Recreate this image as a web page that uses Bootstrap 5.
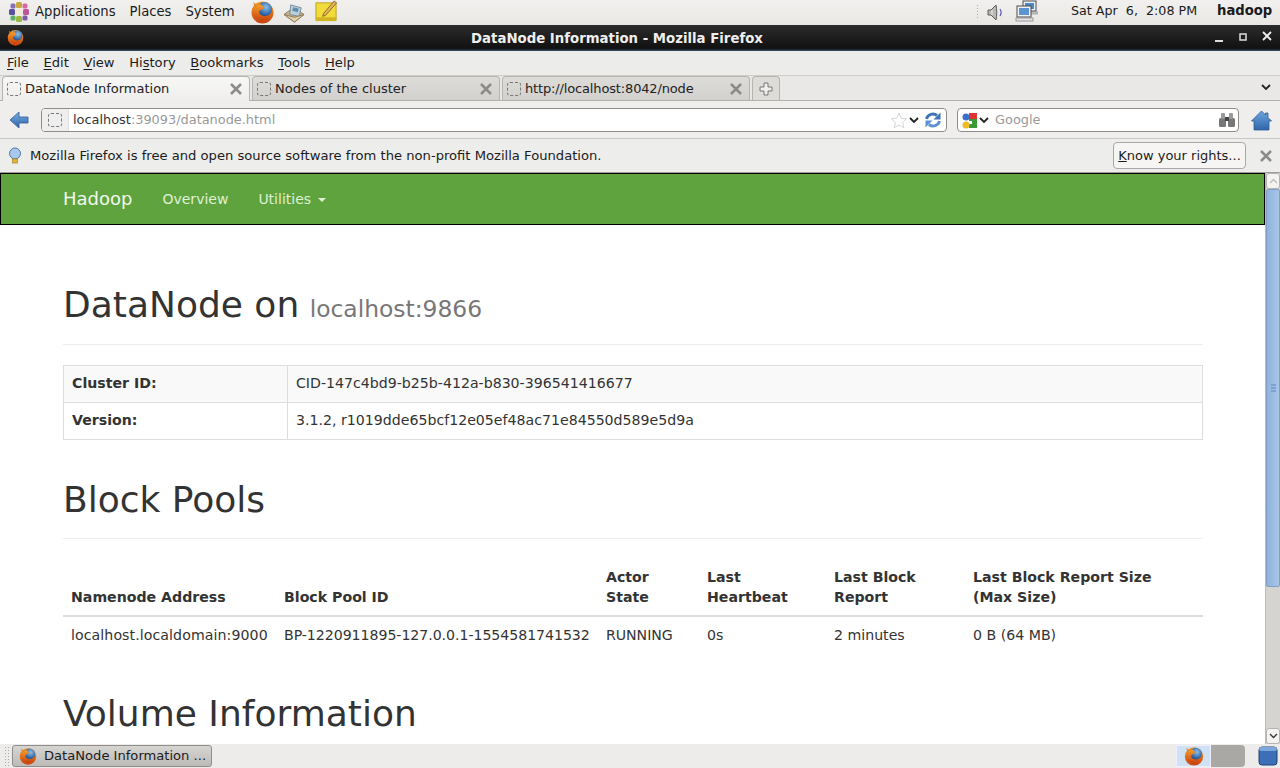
<!DOCTYPE html>
<html lang="en">
<head>
<meta charset="utf-8">
<title>DataNode Information - Mozilla Firefox</title>
<link rel="stylesheet" href="https://cdn.jsdelivr.net/npm/bootstrap@5.3.0/dist/css/bootstrap.min.css">
<style>
html,body{height:768px;overflow:hidden;margin:0}
body{font-family:"DejaVu Sans",sans-serif;font-size:14.15px;color:#333;background:#fff;line-height:20px}
.desk{width:1280px;height:768px}
.top-panel{height:25px;background:linear-gradient(#f1f0ee,#e9e8e5);color:#1b1b1b;padding:0 0 1px 7px;flex:none;font-size:13.2px}
.top-panel .gm{margin-right:14px}
.top-panel .ico{position:absolute}
.dots{position:absolute;left:976px;top:4px;width:3px;height:16px;background-image:radial-gradient(#aaa 1px,transparent 1px);background-size:3px 3px}
.title-bar{height:26px;background:linear-gradient(#2c2c2c,#111 90%,#39506b);color:#eee;font-weight:700;font-size:13.3px;flex:none;position:relative}
.title-bar .ttl{width:100%;text-align:center;padding:1px 46px 0 0}
.chrome-ic{position:absolute;top:4px}
.wctl{position:absolute;right:7px;top:4px;gap:12px}
.menu-row{height:25px;background:#ececea;flex:none;padding-left:7px;gap:14.6px;border-bottom:1px solid #cfcdca;color:#1c1c1c;font-size:13.1px}
.menu-row u{text-underline-offset:2px}
.tab-row{height:25px;background:#e9e8e6;flex:none;padding-left:2px;border-bottom:1px solid #b3b1ad;position:relative;font-size:13px}
.ff-tab{width:248px;height:24px;margin-right:2px;border:1px solid #b6b4b0;border-bottom:0;border-radius:4px 4px 0 0;padding:0 6px 0 4px;background:linear-gradient(#dedcd9,#d3d1ce);color:#222;gap:4px}
.ff-tab.on{background:linear-gradient(#f7f7f6,#efeeec);height:25px;margin-bottom:-1px}
.ff-tab .nm{flex:1;white-space:nowrap;overflow:hidden}
.ff-tab .nm.tight{letter-spacing:-.15px}
.new-tab{width:28px;height:24px;border:1px solid #b6b4b0;border-bottom:0;border-radius:4px 4px 0 0;background:#dedcd9}
.tab-more{position:absolute;right:8px;top:7px}
.dash{width:14px;height:14px;border:1px dashed #777;border-radius:3px;flex:none}
.nav-row{height:38px;background:#efeeec;flex:none;padding:1px 0 0 9px;border-bottom:1px solid #c9c7c4}
.field{height:24px;background:#fff;border:1px solid #8d8c89;border-radius:4px;font-size:12.9px}
.url-f{width:906px;margin-left:12px}
.url-f .ident{width:27px;height:22px;background:#eee;border-right:1px solid #ddd;border-radius:3px 0 0 3px}
.url-f .addr{padding-left:4px;flex:1;color:#999}
.url-f .addr b{font-weight:400;color:#333}
.srch{width:282px;margin-left:10px;padding:0 2px 0 3px}
.srch .hint{flex:1;color:#999;margin-left:5px}
.home-ic{margin-left:12px}
.note-bar{height:34px;background:#ededeb;flex:none;padding-left:8px;border-bottom:1px solid #9d9c99;color:#1c1c1c;font-size:13.13px}
.rights{height:27px;width:133px;background:#f6f5f4;border:1px solid #a8a7a3;border-radius:4px;color:#1c1c1c;font-size:13px;margin-left:auto;margin-right:13px;padding:0;white-space:nowrap}
.note-x{margin-right:7px}
.view{flex:1;min-height:0;overflow:hidden}
.doc{flex:1;min-width:0;overflow:hidden}
.hbar{height:52px;background:#5fa33e;border:1px solid #000;padding-left:62px;color:#dff0d4;font-size:14px}
.hbar .brand{font-size:18px;color:#f2f8ee;margin-right:30px}
.hbar .lnk{margin-right:30px;color:#dff0d4}
.caret-d{display:inline-block;border-top:4px solid;border-left:4px solid transparent;border-right:4px solid transparent;margin-left:2px;vertical-align:middle}
.wrap-c{padding:0 62px 0 63px}
.hd-block{margin-top:60px;padding-bottom:19px;border-bottom:1px solid #eee;margin-bottom:20px}
.hd-block h1,.vol-h{font-size:36px;line-height:39.6px;font-weight:500;color:#333;font-family:"DejaVu Sans",sans-serif}
.hd-block h1{margin:0}
.hd-block small{font-size:23.4px;line-height:1;color:#777;font-weight:400;margin-left:-1px}
.hd-two{margin-top:40px}
.info-t{width:1140px;border-collapse:collapse;margin:0;table-layout:fixed}
.info-t td,.info-t th{border:1px solid #ddd;padding:7px 8px 9px;line-height:20px;color:#333}
.info-t tr:first-child>*{background:#f9f9f9}
.info-t th{width:224px}
.pool-t{width:1140px;margin:0;border-collapse:collapse;table-layout:fixed}
.pool-t th{font-weight:700;padding:8px;vertical-align:bottom;border-bottom:2px solid #ddd;line-height:20px;color:#333}
.pool-t td{padding:8px;line-height:20px;color:#333;white-space:nowrap}
.pool-t th:nth-child(1){width:213px}
.pool-t th:nth-child(2){width:322px}
.pool-t th:nth-child(3){width:101px}
.pool-t th:nth-child(4){width:127px}
.pool-t th:nth-child(5){width:139px}
.pool-t td:nth-child(1){letter-spacing:.08px}
.pool-t td:nth-child(2),.pool-t td:nth-child(3){letter-spacing:-.05px}
.vol-h{margin:41px 0 0}
.sbar{width:15px;flex:none;background:#d6d4d1;border-left:1px solid #bdbbb8}
.sb-btn{height:16px;background:#f4f3f1;border:1px solid #b5b3af;border-radius:3px}
.sb-thumb{height:398px;background:linear-gradient(90deg,#8fb3dd,#a9c6e8);border:1px solid #7e9fc6;border-radius:2px}
.sb-rest{flex:1}
.bot-panel{height:24px;background:#edecea;flex:none;padding-left:4px;position:relative;font-size:13.1px}
.grip{width:6px;height:20px;background-image:radial-gradient(#aaa 1px,transparent 1px);background-size:3px 3px;margin-right:2px}
.task{width:200px;height:22px;background:linear-gradient(#d7d5d2,#bdbbb8);border:1px solid #8f8e8b;border-radius:3px;padding-left:6px;gap:7px;color:#1c1c1c;white-space:nowrap}
.pager{position:absolute;left:1176px;top:1px;width:69px;height:22px;background:#aaa8a4;border-radius:0 4px 4px 0}
.pg-on{width:35px;height:22px;background:#cfe2f5;border:1px solid #eef;display:flex;align-items:center;justify-content:center}
.show-d{position:absolute;left:1258px;top:2px}
</style>
</head>
<body>
<svg width="0" height="0" class="d-block" aria-hidden="true"><defs>
<radialGradient id="fb" cx=".6" cy=".35" r=".6"><stop offset="0" stop-color="#8cc0e8"/><stop offset="1" stop-color="#1d4f96"/></radialGradient>
<linearGradient id="fo" x1="0" y1="0" x2="0" y2="1"><stop offset="0" stop-color="#f5a02a"/><stop offset="1" stop-color="#c8420f"/></linearGradient>
<linearGradient id="hb" x1="0" y1="0" x2="0" y2="1"><stop offset="0" stop-color="#7fb0e2"/><stop offset="1" stop-color="#2a62a8"/></linearGradient>
<linearGradient id="hm" x1="0" y1="0" x2="0" y2="1"><stop offset="0" stop-color="#6fa5dc"/><stop offset="1" stop-color="#2f66a9"/></linearGradient>
<symbol id="fox" viewBox="0 0 24 24"><circle cx="12" cy="12.500" r="11" fill="url(#fo)"/><path d="M3 2c0 2 .5 3 1.500 4L9 9z" fill="#e8791c"/><circle cx="14" cy="9.500" r="7.500" fill="url(#fb)"/><path d="M10 4c1 1.500 3 2 3 4s-3 1-4 3 1 4.500 4 5c3 .5 6-1 8-3-1 5-5 8-9 8-5 0-9-4-9-8 0-4 3-8 7-9z" fill="url(#fo)"/></symbol>
</defs></svg>
<div class="desk d-flex flex-column">
  <div class="top-panel d-flex align-items-center position-relative">
    <svg width="24" height="22" viewBox="0 0 24 22" class="me-1"><g transform="translate(12 11)"><g><rect x="-3" y="-10" width="6" height="6" rx="1.500" fill="#c9a93a"/><rect x="3.500" y="-8.500" width="5" height="5" rx="1.500" fill="#d56aa0"/><rect x="4" y="-3" width="6" height="6" rx="1.500" fill="#c0569a"/><rect x="3.500" y="3.500" width="5" height="5" rx="1.500" fill="#7f5aa8"/><rect x="-3" y="4" width="6" height="6" rx="1.500" fill="#9bb93e"/><rect x="-8.500" y="3.500" width="5" height="5" rx="1.500" fill="#5db06a"/><rect x="-10" y="-3" width="6" height="6" rx="1.500" fill="#5c4fa0"/><rect x="-8.500" y="-8.500" width="5" height="5" rx="1.500" fill="#8a6fb8"/></g><circle r="3" fill="#f5e9d0"/></g></svg>
    <span class="gm">Applications</span><span class="gm">Places</span><span class="gm">System</span>
    <svg class="ico" style="left:250px;top:0" width="25" height="24"><use href="#fox"/></svg>
    <svg class="ico" style="left:283px;top:3px" width="23" height="21" viewBox="0 0 24 22"><path d="M1 12 11 5l11 7-10 8z" fill="#c9b48a" stroke="#8d7b58"/><path d="M8 2l11 3-2 9-10-2z" fill="#bcd0dc" stroke="#6a8496" stroke-width=".9"/><rect x="10" y="5" width="6" height="4" transform="rotate(14 13 7)" fill="#5f8ea8"/><path d="M1 12l11 3 10-3-10 8z" fill="#e2d2ad" stroke="#8d7b58"/></svg>
    <svg class="ico" style="left:315px;top:0" width="23" height="23" viewBox="0 0 24 24"><rect x="1" y="3" width="21" height="18" fill="#f2dc3c" stroke="#b79f1c"/><rect x="1" y="18" width="21" height="4" fill="#d1b41f"/><path d="M9 14 20 1l2.500 2L11 16l-3 1z" fill="#e8b25a" stroke="#6d5320" stroke-width=".8"/></svg>
    <i class="dots"></i>
    <svg class="ico" style="left:986px;top:3px" width="18" height="19" viewBox="0 0 18 19"><path d="M2 7h3l5-5c1 4 1 11 0 15l-5-5H2z" fill="#b9b7b4" stroke="#5d5c5a"/><path d="M6 7v5" stroke="#eee"/><path d="M14 6c1.300 2 1.300 5 0 7" fill="none" stroke="#4858b8" stroke-width="1.200"/></svg>
    <svg class="ico" style="left:1015px;top:0" width="23" height="23" viewBox="0 0 23 23"><rect x="8" y="1" width="13" height="10" fill="#eef2f7" stroke="#4a4a4a"/><rect x="10" y="3" width="9" height="6" fill="#4f86c6"/><path d="M14 12h9v2h-9z" fill="#ccc" stroke="#888" stroke-width=".6"/><rect x="2" y="6" width="14" height="11" fill="#eef2f7" stroke="#4a4a4a"/><rect x="4" y="8" width="10" height="7" fill="#5c94d0"/><rect x="1" y="18" width="17" height="3" fill="#e4e4e4" stroke="#888" stroke-width=".8"/></svg>
    <span class="ico" style="left:1071px;top:1px;white-space:pre;font-size:12.7px">Sat Apr  6,  2:08 PM</span>
    <b class="ico" style="left:1217px;top:1px">hadoop</b>
  </div>
  <div class="title-bar d-flex align-items-center">
    <svg class="chrome-ic" style="left:7px" width="17" height="17"><use href="#fox"/></svg>
    <span class="ttl">DataNode Information - Mozilla Firefox</span>
    <span class="wctl d-flex align-items-center"><svg width="12" height="16"><rect x="2" y="11" width="8" height="2" fill="#ddd"/></svg><svg width="12" height="16"><rect x="3" y="5" width="6" height="6" fill="none" stroke="#ddd" stroke-width="1.500"/></svg><svg width="12" height="16"><path d="M2 3l8 8M10 3l-8 8" stroke="#eee" stroke-width="1.800"/></svg></span>
  </div>
  <div class="menu-row d-flex align-items-center">
    <span><u>F</u>ile</span><span><u>E</u>dit</span><span><u>V</u>iew</span><span>Hi<u>s</u>tory</span><span><u>B</u>ookmarks</span><span><u>T</u>ools</span><span><u>H</u>elp</span>
  </div>
  <div class="tab-row d-flex align-items-end">
    <div class="ff-tab on d-flex align-items-center"><i class="dash"></i><span class="nm">DataNode Information</span><svg width="14" height="14"><path d="M2 2l10 10M12 2 2 12" stroke="#8b8b8b" stroke-width="2.500"/></svg></div>
    <div class="ff-tab d-flex align-items-center"><i class="dash"></i><span class="nm">Nodes of the cluster</span><svg width="14" height="14"><path d="M2 2l10 10M12 2 2 12" stroke="#8b8b8b" stroke-width="2.500"/></svg></div>
    <div class="ff-tab d-flex align-items-center"><i class="dash"></i><span class="nm tight">http://localhost:8042/node</span><svg width="14" height="14"><path d="M2 2l10 10M12 2 2 12" stroke="#8b8b8b" stroke-width="2.500"/></svg></div>
    <div class="new-tab d-flex align-items-center justify-content-center"><svg width="14" height="14"><path d="M5 1h4v4h4v4H9v4H5V9H1V5h4z" fill="#eee" stroke="#777"/></svg></div>
    <svg class="tab-more" width="12" height="8"><path d="M2 2l4 4 4-4" fill="none" stroke="#222" stroke-width="1.800"/></svg>
  </div>
  <div class="nav-row d-flex align-items-center">
    <svg width="20" height="20" viewBox="0 0 20 20"><path d="M1 10 10 2v5h9v6h-9v5z" fill="url(#hb)" stroke="#2b5a96" stroke-width=".8"/></svg>
    <div class="field url-f d-flex align-items-center">
      <div class="ident d-flex align-items-center justify-content-center"><i class="dash"></i></div>
      <span class="addr"><b>localhost</b>:39093/datanode.html</span>
      <svg width="18" height="17" viewBox="0 0 20 18"><path d="M10 1l2.500 5.500 6 .6-4.500 4 1.300 6L10 14l-5.300 3 1.300-6-4.500-4 6-.6z" fill="#fff" stroke="#cfcfcf"/></svg>
      <svg width="12" height="8" class="me-1"><path d="M2 2l4 4 4-4" fill="none" stroke="#222" stroke-width="1.800"/></svg>
      <svg width="18" height="18" viewBox="0 0 18 18" class="me-1"><path d="M2.500 8A6.500 6.500 0 0 1 13 4.500" fill="none" stroke="#3f74b5" stroke-width="3"/><path d="M16.500 1.500v7h-7z" fill="#3f74b5"/><path d="M15.500 10A6.500 6.500 0 0 1 5 13.500" fill="none" stroke="#5f93cf" stroke-width="3"/><path d="M1.500 16.500v-7h7z" fill="#5f93cf"/></svg>
    </div>
    <div class="field srch d-flex align-items-center">
      <svg width="17" height="17" viewBox="0 0 17 17"><rect x="8" y="1" width="8" height="6" fill="#d33"/><path d="M8 7h8v9H8v-4h3V9H8z" fill="#3a9a3a"/><circle cx="5" cy="5" r="3.500" fill="#3b6fc9"/><circle cx="5" cy="13" r="3.500" fill="#eebb22"/></svg>
      <svg width="12" height="8"><path d="M2 2l4 4 4-4" fill="none" stroke="#222" stroke-width="1.800"/></svg>
      <span class="hint">Google</span>
      <svg width="18" height="16" viewBox="0 0 18 16"><rect x="1" y="6" width="7" height="9" rx="1.500" fill="#777"/><rect x="10" y="6" width="7" height="9" rx="1.500" fill="#777"/><rect x="3" y="1" width="4" height="6" rx="1" fill="#999"/><rect x="11" y="1" width="4" height="6" rx="1" fill="#999"/><rect x="7" y="5" width="4" height="4" fill="#444"/></svg>
    </div>
    <svg class="home-ic" width="21" height="21" viewBox="0 0 21 21"><path d="M10.500 1 .5 11h2.500v9h15v-9h2.500L17 7.500V3h-2.500v2z" fill="url(#hm)" stroke="#2b5a96" stroke-width=".8"/></svg>
  </div>
  <div class="note-bar d-flex align-items-center">
    <svg width="14" height="18" viewBox="0 0 14 18" class="me-2"><circle cx="7" cy="6.500" r="5.500" fill="#a9c9ea" stroke="#4f78ab"/><rect x="4.500" y="12" width="5" height="4" fill="#e0b93a" stroke="#a58320" stroke-width=".7"/></svg>
    <span>Mozilla Firefox is free and open source software from the non-profit Mozilla Foundation.</span>
    <button type="button" class="rights"><u>K</u>now your rights...</button>
    <svg width="14" height="14" class="note-x"><path d="M2 2l10 10M12 2 2 12" stroke="#8b8b8b" stroke-width="2.500"/></svg>
  </div>
  <div class="view d-flex">
    <div class="doc">
      <div class="hbar d-flex align-items-center">
        <span class="brand">Hadoop</span>
        <span class="lnk">Overview</span>
        <span class="lnk">Utilities <i class="caret-d"></i></span>
      </div>
      <div class="wrap-c">
        <div class="hd-block"><h1>DataNode on <small>localhost:9866</small></h1></div>
        <table class="info-t">
          <tr><th>Cluster ID:</th><td>CID-147c4bd9-b25b-412a-b830-396541416677</td></tr>
          <tr><th>Version:</th><td>3.1.2, r1019dde65bcf12e05ef48ac71e84550d589e5d9a</td></tr>
        </table>
        <div class="hd-block hd-two"><h1>Block Pools</h1></div>
        <table class="pool-t">
          <thead><tr><th>Namenode Address</th><th>Block Pool ID</th><th>Actor<br>State</th><th>Last<br>Heartbeat</th><th>Last Block<br>Report</th><th>Last Block Report Size<br>(Max Size)</th></tr></thead>
          <tbody><tr><td>localhost.localdomain:9000</td><td>BP-1220911895-127.0.0.1-1554581741532</td><td>RUNNING</td><td>0s</td><td>2 minutes</td><td>0 B (64 MB)</td></tr></tbody>
        </table>
        <h1 class="vol-h">Volume Information</h1>
      </div>
    </div>
    <div class="sbar d-flex flex-column">
      <div class="sb-btn d-flex align-items-center justify-content-center"><svg width="9" height="6"><path d="M1 5l3.500-3.500L8 5" fill="none" stroke="#bbb" stroke-width="1.300"/></svg></div>
      <div class="sb-thumb d-flex align-items-center justify-content-center"><svg width="5" height="8"><path d="M0 1h5M0 4h5M0 7h5" stroke="#5f86b5"/></svg></div>
      <div class="sb-rest"></div>
      <div class="sb-btn d-flex align-items-center justify-content-center"><svg width="9" height="6"><path d="M1 1l3.500 3.500L8 1" fill="none" stroke="#333" stroke-width="1.300"/></svg></div>
    </div>
  </div>
  <div class="bot-panel d-flex align-items-center">
    <i class="grip"></i>
    <div class="task d-flex align-items-center"><svg width="18" height="18"><use href="#fox"/></svg><span>DataNode Information ...</span></div>
    <div class="pager"><div class="pg-on"><svg width="20" height="20"><use href="#fox"/></svg></div></div>
    <svg class="show-d" width="20" height="20" viewBox="0 0 20 20"><rect x="1" y="1" width="18" height="18" rx="3" fill="#3c6fb6" stroke="#1e4276"/><rect x="1" y="1" width="18" height="4" rx="2" fill="#7da6dc"/></svg>
  </div>
</div>
</body>
</html>
